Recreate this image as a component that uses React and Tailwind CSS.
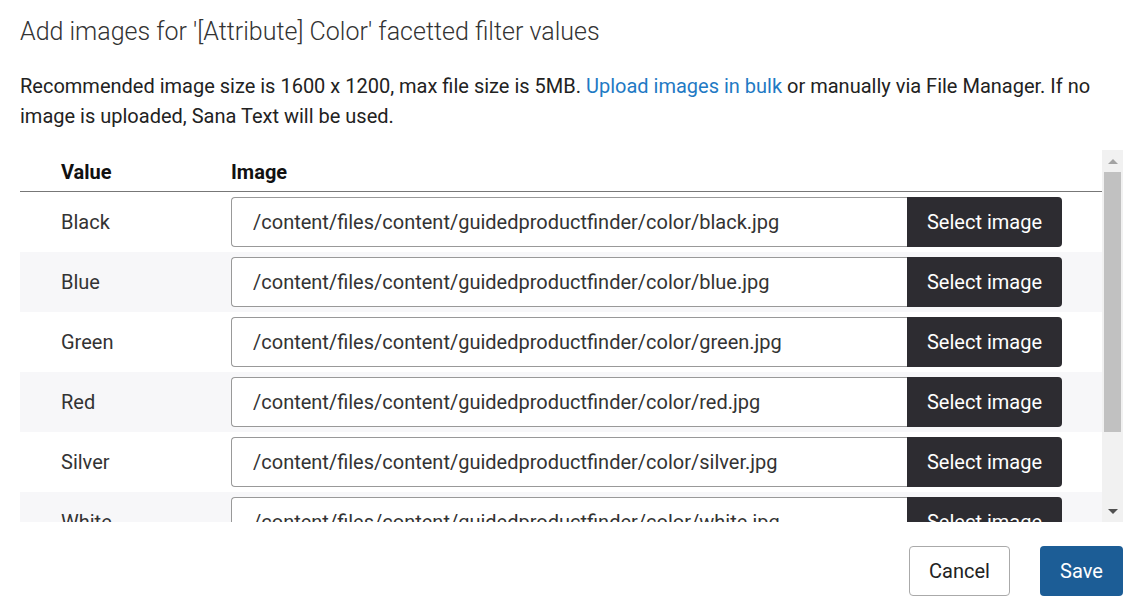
import React from 'react';

const rows = [
  { name: 'Black', file: 'black.jpg' },
  { name: 'Blue', file: 'blue.jpg' },
  { name: 'Green', file: 'green.jpg' },
  { name: 'Red', file: 'red.jpg' },
  { name: 'Silver', file: 'silver.jpg' },
  { name: 'White', file: 'white.jpg' },
];

const Row = ({ row, index }) => (
  <div className={`flex items-center h-[60px] ${index % 2 === 1 ? 'bg-[#f7f7f9]' : 'bg-white'}`}>
    <div className="w-[211px] pl-[41px] text-[20px]">{row.name}</div>
    <div className="flex flex-1 pr-[40px] h-[50px]">
      <input
        readOnly
        value={`/content/files/content/guidedproductfinder/color/${row.file}`}
        className="flex-1 min-w-0 h-full border border-[#999] border-r-0 rounded-l-[4px] bg-white pl-[21px] text-[20px] text-[#333] outline-none font-['Roboto']"
      />
      <button className="w-[155px] h-full bg-[#2d2c31] text-white text-[20px] rounded-r-[4px] font-['Roboto']">
        Select image
      </button>
    </div>
  </div>
);

export default function App() {
  return (
    <div className="w-[1146px] h-[616px] bg-white pl-[20px] pr-[23px] font-['Roboto',sans-serif] text-[#333] overflow-hidden">
      <h1 className="pt-[16px] text-[25px] leading-[32px] font-light">
        Add images for '[Attribute] Color' facetted filter values
      </h1>

      <p className="mt-[23px] text-[20px] leading-[30px] text-[#222]">
        Recommended image size is 1600 x 1200, max file size is 5MB.{' '}
        <a className="text-[#1f7ac4]">Upload images in bulk</a> or manually via File Manager. If no
        image is uploaded, Sana Text will be used.
      </p>

      {/* table with scrollbar */}
      <div className="mt-[19px] flex h-[372px]">
        <div className="flex-1 overflow-hidden pt-[3px]">
          <div className="flex items-center h-[39px] border-b border-[#777] text-[20px] font-bold text-[#111]">
            <div className="w-[211px] pl-[41px]">Value</div>
            <div>Image</div>
          </div>
          {rows.map((row, i) => (
            <Row key={row.name} row={row} index={i} />
          ))}
        </div>
        <div className="w-[21px] bg-[#f1f1f1] flex flex-col items-center">
          <div className="h-[22px] flex items-center justify-center">
            <div className="w-0 h-0 border-l-[5px] border-r-[5px] border-b-[5px] border-l-transparent border-r-transparent border-b-[#a3a3a3]" />
          </div>
          <div className="w-[17px] h-[260px] bg-[#c1c1c1]" />
          <div className="flex-1" />
          <div className="h-[22px] flex items-center justify-center">
            <div className="w-0 h-0 border-l-[5px] border-r-[5px] border-t-[5px] border-l-transparent border-r-transparent border-t-[#505050]" />
          </div>
        </div>
      </div>

      <div className="mt-[24px] flex justify-end gap-[30px]">
        <button className="w-[101px] h-[50px] border border-[#aaa] rounded-[4px] bg-white text-[20px] text-[#222]">
          Cancel
        </button>
        <button className="w-[83px] h-[50px] rounded-[4px] bg-[#1c5d96] text-white text-[20px]">
          Save
        </button>
      </div>
    </div>
  );
}
